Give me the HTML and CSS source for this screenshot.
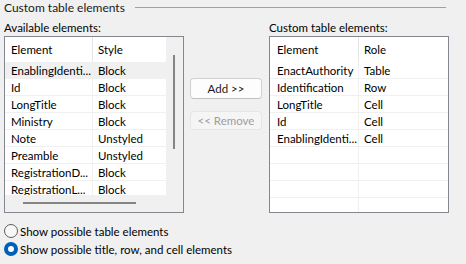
FILE: index.html
```html
<!DOCTYPE html>
<html lang="en">
<head>
  <meta charset="UTF-8">
  <title>Custom table elements</title>
  <link rel="stylesheet" href="styles.css">
</head>
<body>

  <div class="grupo">
    <div class="leyenda"><span>Custom table elements</span><div class="raya"></div></div>

    <div class="columnas">
      <div class="panel">
        <div class="etiqueta">Available elements:</div>
        <div class="lista">
          <div class="area">
            <div class="contenido">
              <div class="cabecera">
                <div class="col1">Element</div><div class="col2">Style</div>
              </div>
              <div class="fila activa"><div class="col1">EnablingIdenti...</div><div class="col2">Block</div></div>
              <div class="fila"><div class="col1">Id</div><div class="col2">Block</div></div>
              <div class="fila"><div class="col1">LongTitle</div><div class="col2">Block</div></div>
              <div class="fila"><div class="col1">Ministry</div><div class="col2">Block</div></div>
              <div class="fila"><div class="col1">Note</div><div class="col2">Unstyled</div></div>
              <div class="fila"><div class="col1">Preamble</div><div class="col2">Unstyled</div></div>
              <div class="fila"><div class="col1">RegistrationD...</div><div class="col2">Block</div></div>
              <div class="fila"><div class="col1">RegistrationL...</div><div class="col2">Block</div></div>
            </div>
            <div class="scroll-v"><div class="thumb-v"></div></div>
          </div>
          <div class="scroll-h"><div class="thumb-h"></div></div>
        </div>
      </div>

      <div class="botones">
        <button class="boton">Add &gt;&gt;</button>
        <button class="boton" disabled>&lt;&lt; Remove</button>
      </div>

      <div class="panel">
        <div class="etiqueta">Custom table elements:</div>
        <div class="lista">
          <div class="contenido">
            <div class="cabecera">
              <div class="col1 ancha">Element</div><div class="col2">Role</div>
            </div>
            <div class="fila"><div class="col1 ancha">EnactAuthority</div><div class="col2">Table</div></div>
            <div class="fila"><div class="col1 ancha">Identification</div><div class="col2">Row</div></div>
            <div class="fila"><div class="col1 ancha">LongTitle</div><div class="col2">Cell</div></div>
            <div class="fila"><div class="col1 ancha">Id</div><div class="col2">Cell</div></div>
            <div class="fila"><div class="col1 ancha">EnablingIdenti...</div><div class="col2">Cell</div></div>
            <div class="fila"><div class="col1 ancha"></div><div class="col2"></div></div>
            <div class="fila"><div class="col1 ancha"></div><div class="col2"></div></div>
            <div class="fila"><div class="col1 ancha"></div><div class="col2"></div></div>
            <div class="fila"><div class="col1 ancha"></div><div class="col2"></div></div>
          </div>
        </div>
      </div>
    </div>

    <div class="opciones">
      <label class="opcion"><span class="radio"></span>Show possible table elements</label>
      <label class="opcion"><span class="radio marcado"></span>Show possible title, row, and cell elements</label>
    </div>
  </div>

</body>
</html>
```

FILE: styles.css
```css
body {
  font-family: Lato, 'Liberation Sans', sans-serif;
  font-size: 11.5px;
  background: #f0f0f0;
  color: #000;
  margin: 0;
  padding: 0;
}

.grupo {
  padding: 0 0 0 4px;
}

.leyenda {
  display: flex;
  align-items: center;
  height: 15px;
  width: 442px;
}

.leyenda span {
  line-height: 15px;
  color: #1a1a1a;
  font-size: 12px;
}

.raya {
  flex: 1;
  border-top: 1px solid #a0a0a0;
  margin-left: 10px;
}

.columnas {
  display: flex;
  margin-top: 5px;
}

.panel {
  width: 180px;
}

.etiqueta {
  height: 16px;
  line-height: 16px;
}

.lista {
  height: 177px;
  box-sizing: border-box;
  border: 1px solid #828790;
  background: #fff;
  overflow: hidden;
}

.area {
  display: flex;
  height: 158px;
}

.contenido {
  flex: 1;
  overflow: hidden;
}

.cabecera, .fila {
  display: flex;
  height: 17px;
  line-height: 17px;
  border-bottom: 1px solid #f0f0f0;
  box-sizing: border-box;
}

.cabecera {
  height: 25px;
  line-height: 26px;
  border-bottom: none;
}

.cabecera .col1 {
  border-right: 1px solid #e5e5e5;
}

.col1 {
  width: 88px;
  padding-left: 6px;
  box-sizing: border-box;
  border-right: 1px solid #f0f0f0;
  white-space: nowrap;
  overflow: hidden;
  text-overflow: ellipsis;
}

.col1.ancha {
  width: 89px;
  padding-left: 7px;
}

.col2 {
  flex: 1;
  padding-left: 5px;
  white-space: nowrap;
}

.activa {
  background: #f0f0f0;
}

.scroll-v {
  width: 17px;
  background: #f0f0f0;
  position: relative;
}

.thumb-v {
  position: absolute;
  left: 7px;
  top: 18px;
  width: 2px;
  height: 94px;
  background: #858585;
}

.scroll-h {
  height: 17px;
  background: #f0f0f0;
  position: relative;
}

.thumb-h {
  position: absolute;
  left: 18px;
  top: 7px;
  width: 113px;
  height: 2px;
  background: #858585;
}

.botones {
  width: 85px;
  display: flex;
  flex-direction: column;
  align-items: flex-start;
  padding-top: 58px;
  padding-left: 6px;
  box-sizing: border-box;
  gap: 12px;
}

.boton {
  font-family: Lato, 'Liberation Sans', sans-serif;
  font-size: 11.5px;
  width: 72px;
  height: 21px;
  padding: 0;
  background: #fdfdfd;
  border: 1px solid #d0d0d0;
  border-bottom-color: #c0c0c0;
  border-radius: 4px;
  color: #1a1a1a;
}

.boton:disabled {
  background: #f5f5f5;
  border-color: #e5e5e5;
  color: #9d9d9d;
  height: 19px;
}

.opciones {
  display: flex;
  flex-direction: column;
  margin-top: 9px;
}

.opcion {
  display: flex;
  align-items: center;
  height: 18px;
}

.radio {
  width: 12px;
  height: 12px;
  border: 1px solid #5d5d5d;
  border-radius: 50%;
  background: #f7f7f7;
  margin-right: 2px;
  box-sizing: content-box;
}

.radio.marcado {
  width: 6px;
  height: 6px;
  border: 4px solid #005fb8;
  background: #fff;
}
```
